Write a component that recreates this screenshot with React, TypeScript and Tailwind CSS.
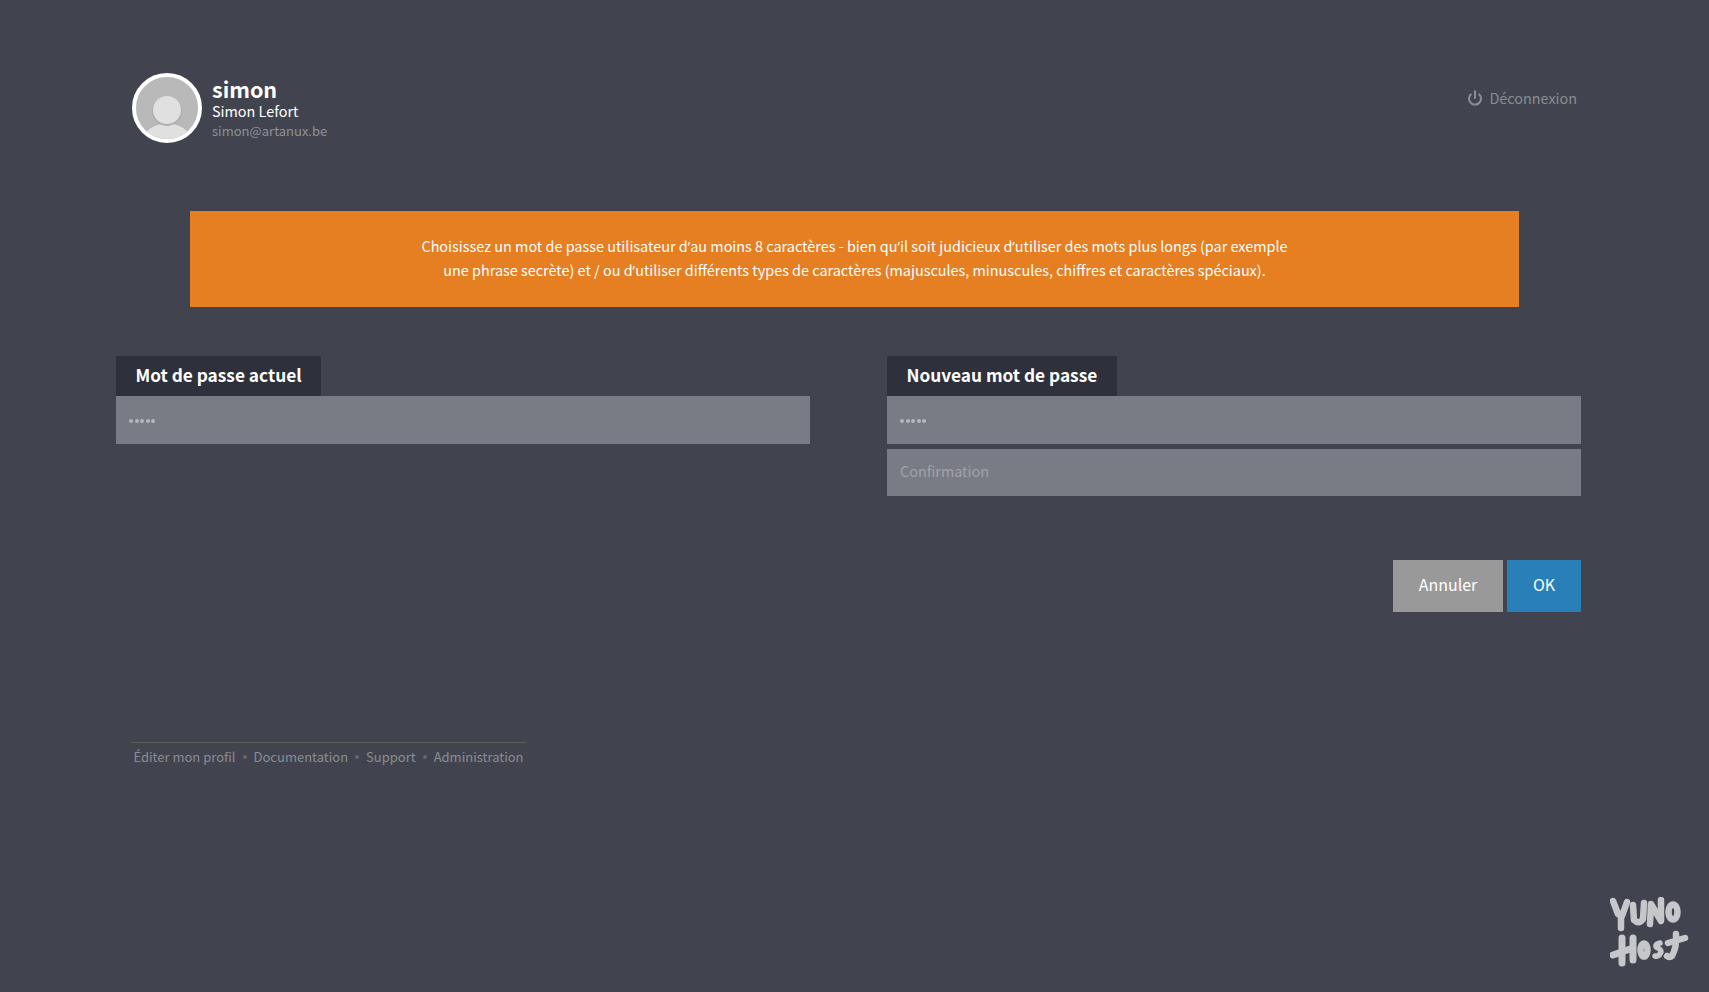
import { Power } from "lucide-react";

function Avatar() {
  return (
    <svg width="70" height="70" viewBox="0 0 70 70" className="shrink-0">
      <defs>
        <clipPath id="avatar-clip">
          <circle cx="35" cy="35" r="31" />
        </clipPath>
      </defs>
      <circle cx="35" cy="35" r="33" fill="#b9b9b9" stroke="#fff" strokeWidth="4" />
      <g clipPath="url(#avatar-clip)">
        <ellipse cx="35" cy="65" rx="23" ry="15" fill="#e0e0e0" stroke="#b0b0b0" strokeWidth="1" />
        <circle cx="35" cy="38" r="15" fill="#adadad" />
        <circle cx="35" cy="37" r="14" fill="#e0e0e0" />
      </g>
    </svg>
  );
}

function Logo() {
  return (
    <svg width="80" height="70" viewBox="0 0 80 70" fill="none" stroke="#c5c7cb" strokeLinecap="round" strokeLinejoin="round" className="shrink-0">
      <g strokeWidth="6.5">
        <path d="M3 4 L8 17 L12 19 L17 5 M11 19 L11 31" />
        <path d="M23 8 L24 23 Q29 28 33 22 L34 6" />
        <path d="M40 27 L41 7 L51 24 L51 3" />
        <ellipse cx="63" cy="15" rx="4.5" ry="7.5" strokeWidth="6.5" />
      </g>
      <g strokeWidth="7">
        <path d="M12 41 L12 66 M3 58 L23 51 M23 41 L23 63" />
        <ellipse cx="34" cy="53" rx="3.5" ry="6.5" strokeWidth="6.5" />
        <path d="M50 46 Q45 47 46 50 Q51 52 51 55 Q49 60 45 59" strokeWidth="5.5" />
        <path d="M58 46 L75 41 M66 37 Q67 50 62 59 Q60 61 57 59" strokeWidth="6.5" />
      </g>
    </svg>
  );
}

function Apos() {
  return <span className="font-['Noto_Sans'] leading-none">’</span>;
}

function Dots() {
  return (
    <div className="flex h-[48px] items-center gap-[1.5px] bg-[#797c84] px-[13px] pt-[2px]">
      {[0, 1, 2, 3, 4].map((i) => (
        <span key={i} className="h-[4px] w-[4px] rounded-full bg-[#b4b6ba]" />
      ))}
    </div>
  );
}

export default function App() {
  const footerLinks = ["Éditer mon profil", "Documentation", "Support", "Administration"];

  return (
    <div className="relative h-[992px] w-full overflow-hidden bg-[#41444f] font-['Noto_Sans_CJK_SC','Source_Sans_Pro',sans-serif] text-white">
      <div className="ml-[116px] w-[1465px] pt-[73px]">
        <header className="flex items-start justify-between pl-[16px] pr-[4px]">
          <div className="flex items-center gap-[10px]">
            <Avatar />
            <div className="mt-[1px] flex flex-col">
              <span className="text-[21.5px] font-bold leading-[24px]">simon</span>
              <span className="text-[14.4px] leading-[20px]">Simon Lefort</span>
              <span className="mt-[1px] text-[13px] leading-[18px] text-[#8f9197]">simon@artanux.be</span>
            </div>
          </div>
          <a className="mt-[15px] flex items-center gap-[7px] text-[14.4px] leading-[20px] text-[#8a8c92]">
            <Power size={16} strokeWidth={3.2} className="-mr-[1px]" />
            Déconnexion
          </a>
        </header>

        <div className="ml-[74px] mt-[68px] flex h-[96px] w-[1329px] items-center justify-center bg-[#e67e22] text-center text-[14.42px] leading-[24px]">
          <p className="-mt-[2px]">
            Choisissez un mot de passe utilisateur d<Apos />au moins 8 caractères - bien qu<Apos />il soit judicieux d<Apos />utiliser des mots plus longs (par exemple
            <br />
            une phrase secrète) et / ou d<Apos />utiliser différents types de caractères (majuscules, minuscules, chiffres et caractères spéciaux).
          </p>
        </div>

        <div className="mt-[49px] flex items-start justify-between">
          <div className="w-[694px]">
            <div className="inline-block h-[40px] bg-[#2e313c] px-[19.5px] text-[17.25px] font-bold leading-[38px]">Mot de passe actuel</div>
            <Dots />
          </div>
          <div className="w-[694px]">
            <div className="inline-block h-[40px] bg-[#2e313c] px-[19.5px] text-[17.25px] font-bold leading-[38px]">Nouveau mot de passe</div>
            <Dots />
            <div className="mt-[5px] flex h-[47px] items-center bg-[#797c84] px-[13px] pb-[4px] text-[14.4px] text-[#a0a2a7]">Confirmation</div>
          </div>
        </div>

        <div className="mt-[64px] flex justify-end gap-[4px]">
          <button className="h-[52px] w-[110px] bg-[#999999] pb-[4px] text-[16px] text-white">Annuler</button>
          <button className="h-[52px] w-[74px] bg-[#2980b9] pb-[4px] text-[16px] text-white">OK</button>
        </div>

        <footer className="ml-[15px] mt-[130px] w-[395px] border-t border-[#5f6159] pt-[4px]">
          <div className="flex items-center justify-center gap-[7px] whitespace-nowrap text-[13px] leading-[20px] text-[#8a8c92]">
            {footerLinks.map((link, i) => (
              <span key={link} className="flex items-center gap-[7px]">
                {i > 0 && <span className="h-[4px] w-[4px] rounded-full bg-[#62656e]" />}
                {link}
              </span>
            ))}
          </div>
        </footer>
      </div>

      <div className="absolute left-[1610px] top-[897px]">
        <Logo />
      </div>
    </div>
  );
}
